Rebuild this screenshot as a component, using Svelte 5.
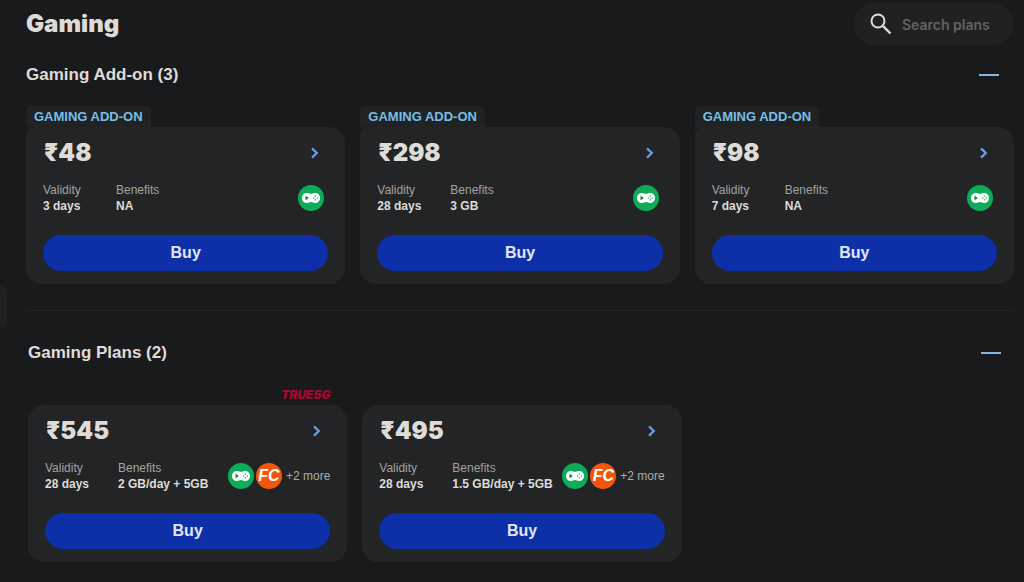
<script>
    let search = "";

    let sections = [
        {
            title: "Gaming Add-on",
            open: true,
            plans: [
                {price: 48, tag: "GAMING ADD-ON", validity: "3 days", benefits: "NA", apps: ["games"]},
                {price: 298, tag: "GAMING ADD-ON", validity: "28 days", benefits: "3 GB", apps: ["games"]},
                {price: 98, tag: "GAMING ADD-ON", validity: "7 days", benefits: "NA", apps: ["games"]}
            ]
        },
        {
            title: "Gaming Plans",
            open: true,
            plans: [
                {price: 545, true5g: true, validity: "28 days", benefits: "2 GB/day + 5GB", apps: ["games", "fancode"], more: 2},
                {price: 495, validity: "28 days", benefits: "1.5 GB/day + 5GB", apps: ["games", "fancode"], more: 2}
            ]
        }
    ];

    function toggle(index){
        sections[index].open = !sections[index].open;
    }

    function matches(plan, text){
        return (plan.price + " " + plan.validity + " " + plan.benefits).toLowerCase().includes(text.toLowerCase());
    }
</script>

<main class="page">
    <button class="sideTab" aria-label="Open menu"></button>

    <header class="topBar">
        <h1>Gaming</h1>
        <label class="search">
            <svg width="22" height="22" viewBox="0 0 22 22" fill="none" stroke="#dedcd8" stroke-width="2">
                <circle cx="8" cy="8" r="6.5" />
                <path d="M12.8 12.8L20.5 20.5" stroke-width="2.4" />
            </svg>
            <input type="text" placeholder="Search plans" aria-label="Search plans" bind:value={search} />
        </label>
    </header>

    {#each sections as section, i}
        <section class="section">
            <div class="sectionHead">
                <h2>{section.title} ({section.plans.length})</h2>
                <button class="toggle" class:closed={!section.open} aria-label="Toggle {section.title}" on:click={() => toggle(i)}>
                    <span></span>
                </button>
            </div>

            {#if section.open}
                <div class="plans">
                    {#each section.plans.filter(p => matches(p, search)) as plan}
                        <article class="plan">
                            <div class="tagRow">
                                {#if plan.tag}
                                    <span class="tag">{plan.tag}</span>
                                {/if}
                                {#if plan.true5g}
                                    <span class="true5g">TRUE5G</span>
                                {/if}
                            </div>
                            <div class="card">
                                <div class="priceRow">
                                    <h3>₹{plan.price}</h3>
                                    <button class="details" aria-label="View plan details">
                                        <svg width="8" height="12" viewBox="0 0 8 12" fill="none" stroke="#6ba0e4" stroke-width="2.2">
                                            <path d="M1 1.4L5.8 6L1 10.6" />
                                        </svg>
                                    </button>
                                </div>
                                <div class="info">
                                    <dl>
                                        <div class="validity">
                                            <dt>Validity</dt>
                                            <dd>{plan.validity}</dd>
                                        </div>
                                        <div>
                                            <dt>Benefits</dt>
                                            <dd>{plan.benefits}</dd>
                                        </div>
                                    </dl>
                                    <div class="apps" class:single={!plan.more}>
                                        {#each plan.apps as app}
                                            {#if app === "games"}
                                                <svg width="26" height="26" viewBox="0 0 26 26">
                                                    <circle cx="13" cy="13" r="13" fill="#0dac57" />
                                                    <path d="M8.8 8C11 8 11.3 8.8 13 8.8S15 8 17.2 8C20 8 22 10.2 22 13S20 18 17.2 18C15 18 14.7 17 13 17S11 18 8.8 18C6 18 4 15.8 4 13S6 8 8.8 8Z" fill="#fff" />
                                                    <path d="M7.5 10.8L10.9 13L7.5 15.2Z" fill="#0b7d45" />
                                                    <g fill="#3fae76">
                                                        <circle cx="17.4" cy="11.2" r="0.8" />
                                                        <circle cx="17.4" cy="14.8" r="0.8" />
                                                        <circle cx="15.6" cy="13" r="0.8" />
                                                        <circle cx="19.2" cy="13" r="0.8" />
                                                    </g>
                                                </svg>
                                            {:else}
                                                <span class="fancode">FC</span>
                                            {/if}
                                        {/each}
                                        {#if plan.more}
                                            <span class="more">+{plan.more} more</span>
                                        {/if}
                                    </div>
                                </div>
                                <button class="buy">Buy</button>
                            </div>
                        </article>
                    {/each}
                </div>
            {/if}
        </section>
    {/each}
</main>

<style>
:global(body){
    background: #191a1c;
}
.page{
    position: relative;
    box-sizing: border-box;
    min-height: 100vh;
    padding: 3px 10px 20px 26px;
    background: #191a1c;
    color: #dedcd8;
    font-family: "Liberation Sans", Arial, sans-serif;
}
h1, h2, h3, dl, dd{
    margin: 0;
}
button{
    padding: 0;
    border: 0;
    background: none;
    font-family: inherit;
    cursor: pointer;
}
svg{
    display: block;
}
.sideTab{
    position: absolute;
    left: 0;
    top: 286px;
    width: 7px;
    height: 42px;
    border-radius: 0 7px 7px 0;
    background: #202122;
}
.topBar{
    display: flex;
    justify-content: space-between;
    align-items: center;
}
h1, h3{
    font-family: Inter, sans-serif;
    font-size: 24px;
    line-height: 30px;
    font-weight: 900;
}
.search{
    display: flex;
    align-items: center;
    gap: 10px;
    box-sizing: border-box;
    width: 160px;
    height: 42px;
    padding: 0 16px;
    border-radius: 21px;
    background: #202123;
}
.search svg{
    flex: none;
}
.search input{
    flex: 1;
    min-width: 0;
    padding: 0;
    border: 0;
    outline: 0;
    background: none;
    color: #dedcd8;
    font-family: Inter, sans-serif;
    font-size: 14px;
    font-weight: 600;
}
.search input::placeholder{
    color: #64635e;
    opacity: 1;
}
.section{
    padding-top: 15px;
}
.section + .section{
    margin-top: 26px;
    padding-top: 27px;
    border-top: 1px solid #242527;
}
/* lower sections sit slightly to the right of the first one */
.section + .section .sectionHead,
.section + .section .plans{
    margin-left: 2px;
    margin-right: -2px;
}
.sectionHead{
    display: flex;
    justify-content: space-between;
    align-items: center;
    height: 30px;
    padding-right: 15px;
}
h2{
    font-size: 17px;
    line-height: 20px;
    font-weight: 700;
}
.toggle{
    display: flex;
    align-items: center;
    justify-content: center;
    width: 20px;
    height: 20px;
}
.toggle span{
    width: 20px;
    height: 2px;
    background: #86b3e0;
}
.toggle.closed span{
    box-shadow: 0 -6px #86b3e0;
}
.plans{
    display: grid;
    grid-template-columns: repeat(3, minmax(0, 1fr));
    gap: 15px;
    padding-top: 16px;
}
.tagRow{
    display: flex;
    height: 21px;
}
.tag{
    padding: 0 8px;
    border-radius: 5px 5px 0 0;
    background: #202224;
    color: #77bfe4;
    font-size: 13px;
    line-height: 21px;
    font-weight: 700;
}
.true5g{
    margin-left: auto;
    padding-right: 17px;
    color: #a8062f;
    font-family: Inter, sans-serif;
    font-size: 12px;
    line-height: 21px;
    font-weight: 900;
    font-style: italic;
}
.card{
    padding: 11px 17px 13px;
    border-radius: 16px;
    background: #222426;
}
.tagRow:has(.tag) + .card{
    border-top-left-radius: 8px;
}
.priceRow{
    display: flex;
    justify-content: space-between;
    align-items: center;
    height: 30px;
    padding: 0 9px 0 1px;
}
.info{
    display: flex;
    justify-content: space-between;
    align-items: center;
    margin: 14px 0 21px;
}
dl{
    display: flex;
    white-space: nowrap;
}
.validity{
    width: 73px;
}
dt, dd{
    font-size: 12px;
    line-height: 16px;
}
dt{
    color: #a3a3a2;
}
dd{
    font-weight: 700;
}
.apps{
    display: flex;
    align-items: center;
    gap: 2px;
}
.apps.single{
    padding-right: 4px;
}
.fancode{
    width: 26px;
    height: 26px;
    border-radius: 50%;
    background: #f2560d;
    color: #fff;
    font-size: 16px;
    line-height: 26px;
    font-weight: 700;
    font-style: italic;
    text-align: center;
}
.more{
    padding-left: 2px;
    color: #adadab;
    font-size: 12px;
    white-space: nowrap;
}
.buy{
    display: block;
    width: 100%;
    height: 36px;
    border-radius: 18px;
    background: #0d30a8;
    color: #e1e5f4;
    font-size: 16px;
    font-weight: 700;
}
@media (max-width: 900px){
    .plans{
        grid-template-columns: repeat(auto-fill, minmax(300px, 1fr));
    }
}
</style>
